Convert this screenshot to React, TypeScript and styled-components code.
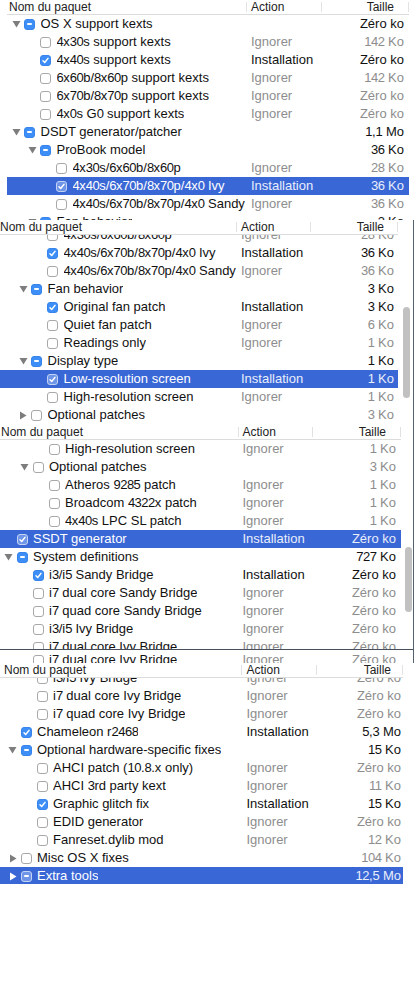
import React from 'react';
import styled, { createGlobalStyle, css } from 'styled-components';

const GlobalStyle = createGlobalStyle`
  html, body { margin: 0; padding: 0; background: #fff; }
  body {
    font-family: "Liberation Sans", Arial, Helvetica, sans-serif;
    -webkit-font-smoothing: antialiased;
  }
  #root { width: 420px; }
`;

type Check = 'on' | 'off' | 'mixed';

type Row = {
  label: string;
  level: number;
  check: Check;
  toggle?: 'open' | 'closed';
  action?: 'Installation' | 'Ignorer';
  size: string;
  selected?: boolean;
};

type Geometry = {
  tableLeft: number;
  base: number;
  actionX: number;
  sizeRight: number;
  sep1: number;
  sep2: number;
  tableRight: number;
  headerNameX: number;
};

type PanelSpec = {
  height: number;
  scroll: number;
  header: boolean;
  geometry: Geometry;
  rows: Row[];
  frameWidth?: number;
  edge?: boolean;
  bottomLine?: boolean;
  scrollbar?: { top: number; height: number; left: number };
};

const SEL_BG = '#3a67d6';
const DIM = '#8d8d8d';

const Page = styled.main`
  display: flex;
  flex-direction: column;
  width: 420px;
  min-height: 1000px;
  background: #fff;
`;

const Frame = styled.section<{ $h: number; $w?: number; $edge?: boolean; $line?: boolean }>`
  position: relative;
  flex: none;
  height: ${(p) => p.$h}px;
  width: ${(p) => (p.$w ? `${p.$w}px` : '420px')};
  overflow: hidden;
  background: #fff;
  ${(p) =>
    p.$edge &&
    css`
      border-right: 1px solid #54616f;
    `}
  ${(p) =>
    p.$line &&
    css`
      border-bottom: 1px solid #45505c;
    `}
`;

const Header = styled.div<{ $left: number; $width: number }>`
  position: relative;
  z-index: 1;
  display: flex;
  height: 15px;
  box-sizing: border-box;
  margin-left: ${(p) => p.$left}px;
  width: ${(p) => p.$width}px;
  border-bottom: 1px solid #dcdcdc;
  background: #fff;
  font-size: 12px;
  line-height: 14px;
  color: #222;
  white-space: nowrap;
`;

const HeadCell = styled.div<{ $width?: number; $pl?: number; $pr?: number; $right?: boolean }>`
  position: relative;
  flex: ${(p) => (p.$width ? 'none' : '1')};
  width: ${(p) => (p.$width ? `${p.$width}px` : 'auto')};
  box-sizing: border-box;
  padding-left: ${(p) => p.$pl ?? 0}px;
  padding-right: ${(p) => p.$pr ?? 0}px;
  text-align: ${(p) => (p.$right ? 'right' : 'left')};
  overflow: hidden;
  &::after {
    content: '';
    position: absolute;
    right: 0;
    top: 2px;
    bottom: 2px;
    width: 1px;
    background: #e2e2e2;
  }
`;

const Body = styled.div<{ $scroll: number }>`
  display: flex;
  flex-direction: column;
  margin-top: ${(p) => -p.$scroll}px;
`;

const RowLine = styled.div<{ $sel: boolean; $left: number; $width: number; $pr: number }>`
  display: flex;
  align-items: center;
  flex: none;
  height: 18px;
  box-sizing: border-box;
  margin-left: ${(p) => p.$left}px;
  width: ${(p) => p.$width}px;
  padding-right: ${(p) => p.$pr}px;
  background: ${(p) => (p.$sel ? SEL_BG : 'transparent')};
  font-size: 13px;
  line-height: 18px;
  white-space: nowrap;
`;

const NameCell = styled.div<{ $width: number; $indent: number }>`
  display: flex;
  align-items: center;
  flex: none;
  width: ${(p) => p.$width}px;
  box-sizing: border-box;
  padding-left: ${(p) => p.$indent}px;
  overflow: hidden;
`;

const ToggleSlot = styled.span`
  display: inline-flex;
  align-items: center;
  justify-content: center;
  flex: none;
  width: 16px;
  height: 18px;
`;

const Box = styled.span<{ $state: Check; $sel: boolean }>`
  display: inline-flex;
  align-items: center;
  justify-content: center;
  flex: none;
  width: 11px;
  height: 11px;
  box-sizing: border-box;
  border-radius: 3px;
  margin-right: 5.5px;
  ${(p) =>
    p.$state === 'off'
      ? css`
          background: #fff;
          border: 1px solid #a8a8a8;
        `
      : p.$sel
      ? css`
          background: #6f95e8;
          border: 1px solid #c4d3f4;
        `
      : css`
          background: #3d8ef6;
          border: 1px solid #3684ec;
        `}
`;

const MixBar = styled.span`
  display: block;
  width: 5px;
  height: 1.6px;
  border-radius: 1px;
  background: #fff;
`;

const Label = styled.span<{ $sel: boolean }>`
  color: ${(p) => (p.$sel ? '#fff' : '#111')};
  overflow: hidden;
`;

const Num = styled.span`
  letter-spacing: -0.5px;
`;

const ActionCell = styled.div<{ $dim: boolean; $sel: boolean }>`
  flex: 1;
  min-width: 0;
  color: ${(p) => (p.$sel ? '#e9eefb' : p.$dim ? DIM : '#111')};
`;

const SizeCell = styled.div<{ $dim: boolean; $sel: boolean }>`
  flex: none;
  width: 80px;
  text-align: right;
  color: ${(p) => (p.$sel ? '#e9eefb' : p.$dim ? DIM : '#111')};
`;

const ScrollThumb = styled.div`
  position: absolute;
  z-index: 2;
  width: 7px;
  border-radius: 4px;
  background: #c1c1c1;
`;

function Digits({ text }: { text: string }) {
  const parts = text.split(/(\d+)/);
  return (
    <>
      {parts.map((part, i) => (/^\d+$/.test(part) ? <Num key={i}>{part}</Num> : <React.Fragment key={i}>{part}</React.Fragment>))}
    </>
  );
}

function Triangle({ open, sel }: { open: boolean; sel: boolean }) {
  const fill = sel ? '#ffffff' : '#7d7d7d';
  return open ? (
    <svg width="9" height="8" viewBox="0 0 9 8">
      <polygon points="0.5,1 8.5,1 4.5,7.5" fill={fill} />
    </svg>
  ) : (
    <svg width="8" height="9" viewBox="0 0 8 9">
      <polygon points="1,0.5 7.5,4.5 1,8.5" fill={fill} />
    </svg>
  );
}

function CheckBox({ state, sel }: { state: Check; sel: boolean }) {
  return (
    <Box $state={state} $sel={sel}>
      {state === 'on' && (
        <svg width="9" height="9" viewBox="0 0 9 9">
          <path d="M2 4.8 L3.7 6.5 L7 2.4" fill="none" stroke="#fff" strokeWidth="1.5" strokeLinecap="round" strokeLinejoin="round" />
        </svg>
      )}
      {state === 'mixed' && <MixBar />}
    </Box>
  );
}

function TreeRow({ row, g }: { row: Row; g: Geometry }) {
  const sel = !!row.selected;
  const dim = row.action === 'Ignorer' || (!row.action && row.check === 'off');
  const indent = g.base + 16 * row.level - 16 - g.tableLeft;
  return (
    <RowLine $sel={sel} $left={g.tableLeft} $width={g.tableRight - g.tableLeft} $pr={g.tableRight - g.sizeRight}>
      <NameCell $width={g.actionX - g.tableLeft} $indent={indent}>
        <ToggleSlot>{row.toggle && <Triangle open={row.toggle === 'open'} sel={sel} />}</ToggleSlot>
        <CheckBox state={row.check} sel={sel} />
        <Label $sel={sel}>
          <Digits text={row.label} />
        </Label>
      </NameCell>
      <ActionCell $dim={dim} $sel={sel}>
        {row.action ?? ''}
      </ActionCell>
      <SizeCell $dim={dim} $sel={sel}>
        <Digits text={row.size} />
      </SizeCell>
    </RowLine>
  );
}

function Panel({ spec }: { spec: PanelSpec }) {
  const g = spec.geometry;
  return (
    <Frame $h={spec.height} $w={spec.frameWidth} $edge={spec.edge} $line={spec.bottomLine}>
      {spec.header && (
        <Header $left={g.tableLeft} $width={g.tableRight - g.tableLeft}>
          <HeadCell $width={g.sep1 - g.tableLeft} $pl={g.headerNameX - g.tableLeft}>
            Nom du paquet
          </HeadCell>
          <HeadCell $width={g.sep2 - g.sep1} $pl={g.actionX - g.sep1}>
            Action
          </HeadCell>
          <HeadCell $right $pr={g.tableRight - g.sizeRight + 10}>
            Taille
          </HeadCell>
        </Header>
      )}
      <Body $scroll={spec.scroll}>
        {spec.rows.map((r, i) => (
          <TreeRow key={i} row={r} g={g} />
        ))}
      </Body>
      {spec.scrollbar && (
        <ScrollThumb
          style={{ left: spec.scrollbar.left, top: spec.scrollbar.top, height: spec.scrollbar.height }}
        />
      )}
    </Frame>
  );
}

const g1: Geometry = { tableLeft: 7, base: 24, actionX: 251, sizeRight: 404, sep1: 247, sep2: 322, tableRight: 409, headerNameX: 9 };
const g2: Geometry = { tableLeft: -2, base: 15, actionX: 241, sizeRight: 394, sep1: 237, sep2: 311, tableRight: 398, headerNameX: 0 };
const g3: Geometry = { tableLeft: -1, base: 16.5, actionX: 242.5, sizeRight: 396, sep1: 239, sep2: 313, tableRight: 401, headerNameX: 1 };
const g4: Geometry = { tableLeft: 0, base: 20.5, actionX: 246.5, sizeRight: 401, sep1: 242, sep2: 317, tableRight: 403, headerNameX: 4 };

const panels: PanelSpec[] = [
  {
    height: 220,
    scroll: 0,
    header: true,
    geometry: g1,
    rows: [
      { label: 'OS X support kexts', level: 0, check: 'mixed', toggle: 'open', size: 'Zéro ko' },
      { label: '4x30s support kexts', level: 1, check: 'off', action: 'Ignorer', size: '142 Ko' },
      { label: '4x40s support kexts', level: 1, check: 'on', action: 'Installation', size: 'Zéro ko' },
      { label: '6x60b/8x60p support kexts', level: 1, check: 'off', action: 'Ignorer', size: '142 Ko' },
      { label: '6x70b/8x70p support kexts', level: 1, check: 'off', action: 'Ignorer', size: 'Zéro ko' },
      { label: '4x0s G0 support kexts', level: 1, check: 'off', action: 'Ignorer', size: 'Zéro ko' },
      { label: 'DSDT generator/patcher', level: 0, check: 'mixed', toggle: 'open', size: '1,1 Mo' },
      { label: 'ProBook model', level: 1, check: 'mixed', toggle: 'open', size: '36 Ko' },
      { label: '4x30s/6x60b/8x60p', level: 2, check: 'off', action: 'Ignorer', size: '28 Ko' },
      { label: '4x40s/6x70b/8x70p/4x0 Ivy', level: 2, check: 'on', action: 'Installation', size: '36 Ko', selected: true },
      { label: '4x40s/6x70b/8x70p/4x0 Sandy', level: 2, check: 'off', action: 'Ignorer', size: '36 Ko' },
      { label: 'Fan behavior', level: 1, check: 'mixed', toggle: 'open', size: '3 Ko' },
    ],
  },
  {
    height: 205,
    scroll: 9,
    header: true,
    geometry: g2,
    frameWidth: 413,
    edge: true,
    scrollbar: { left: 403, top: 87, height: 91 },
    rows: [
      { label: '4x30s/6x60b/8x60p', level: 2, check: 'off', action: 'Ignorer', size: '28 Ko' },
      { label: '4x40s/6x70b/8x70p/4x0 Ivy', level: 2, check: 'on', action: 'Installation', size: '36 Ko' },
      { label: '4x40s/6x70b/8x70p/4x0 Sandy', level: 2, check: 'off', action: 'Ignorer', size: '36 Ko' },
      { label: 'Fan behavior', level: 1, check: 'mixed', toggle: 'open', size: '3 Ko' },
      { label: 'Original fan patch', level: 2, check: 'on', action: 'Installation', size: '3 Ko' },
      { label: 'Quiet fan patch', level: 2, check: 'off', action: 'Ignorer', size: '6 Ko' },
      { label: 'Readings only', level: 2, check: 'off', action: 'Ignorer', size: '1 Ko' },
      { label: 'Display type', level: 1, check: 'mixed', toggle: 'open', size: '1 Ko' },
      { label: 'Low-resolution screen', level: 2, check: 'on', action: 'Installation', size: '1 Ko', selected: true },
      { label: 'High-resolution screen', level: 2, check: 'off', action: 'Ignorer', size: '1 Ko' },
      { label: 'Optional patches', level: 1, check: 'off', toggle: 'closed', size: '3 Ko' },
    ],
  },
  {
    height: 224,
    scroll: 0,
    header: true,
    geometry: g3,
    frameWidth: 413,
    edge: true,
    bottomLine: true,
    scrollbar: { left: 405, top: 122, height: 65 },
    rows: [
      { label: 'High-resolution screen', level: 2, check: 'off', action: 'Ignorer', size: '1 Ko' },
      { label: 'Optional patches', level: 1, check: 'off', toggle: 'open', size: '3 Ko' },
      { label: 'Atheros 9285 patch', level: 2, check: 'off', action: 'Ignorer', size: '1 Ko' },
      { label: 'Broadcom 4322x patch', level: 2, check: 'off', action: 'Ignorer', size: '1 Ko' },
      { label: '4x40s LPC SL patch', level: 2, check: 'off', action: 'Ignorer', size: '1 Ko' },
      { label: 'SSDT generator', level: 0, check: 'on', action: 'Installation', size: 'Zéro ko', selected: true },
      { label: 'System definitions', level: 0, check: 'mixed', toggle: 'open', size: '727 Ko' },
      { label: 'i3/i5 Sandy Bridge', level: 1, check: 'on', action: 'Installation', size: 'Zéro ko' },
      { label: 'i7 dual core Sandy Bridge', level: 1, check: 'off', action: 'Ignorer', size: 'Zéro ko' },
      { label: 'i7 quad core Sandy Bridge', level: 1, check: 'off', action: 'Ignorer', size: 'Zéro ko' },
      { label: 'i3/i5 Ivy Bridge', level: 1, check: 'off', action: 'Ignorer', size: 'Zéro ko' },
      { label: 'i7 dual core Ivy Bridge', level: 1, check: 'off', action: 'Ignorer', size: 'Zéro ko' },
    ],
  },
  {
    height: 13,
    scroll: -1,
    header: false,
    geometry: g3,
    frameWidth: 413,
    edge: true,
    rows: [{ label: 'i7 dual core Ivy Bridge', level: 1, check: 'off', action: 'Ignorer', size: 'Zéro ko' }],
  },
  {
    height: 221,
    scroll: 9,
    header: true,
    geometry: g4,
    rows: [
      { label: 'i3/i5 Ivy Bridge', level: 1, check: 'off', action: 'Ignorer', size: 'Zéro ko' },
      { label: 'i7 dual core Ivy Bridge', level: 1, check: 'off', action: 'Ignorer', size: 'Zéro ko' },
      { label: 'i7 quad core Ivy Bridge', level: 1, check: 'off', action: 'Ignorer', size: 'Zéro ko' },
      { label: 'Chameleon r2468', level: 0, check: 'on', action: 'Installation', size: '5,3 Mo' },
      { label: 'Optional hardware-specific fixes', level: 0, check: 'mixed', toggle: 'open', size: '15 Ko' },
      { label: 'AHCI patch (10.8.x only)', level: 1, check: 'off', action: 'Ignorer', size: 'Zéro ko' },
      { label: 'AHCI 3rd party kext', level: 1, check: 'off', action: 'Ignorer', size: '11 Ko' },
      { label: 'Graphic glitch fix', level: 1, check: 'on', action: 'Installation', size: '15 Ko' },
      { label: 'EDID generator', level: 1, check: 'off', action: 'Ignorer', size: 'Zéro ko' },
      { label: 'Fanreset.dylib mod', level: 1, check: 'off', action: 'Ignorer', size: '12 Ko' },
      { label: 'Misc OS X fixes', level: 0, check: 'off', toggle: 'closed', size: '104 Ko' },
      { label: 'Extra tools', level: 0, check: 'mixed', toggle: 'closed', size: '12,5 Mo', selected: true },
    ],
  },
];

export default function App() {
  return (
    <>
      <GlobalStyle />
      <Page>
        {panels.map((p, i) => (
          <Panel key={i} spec={p} />
        ))}
      </Page>
    </>
  );
}
